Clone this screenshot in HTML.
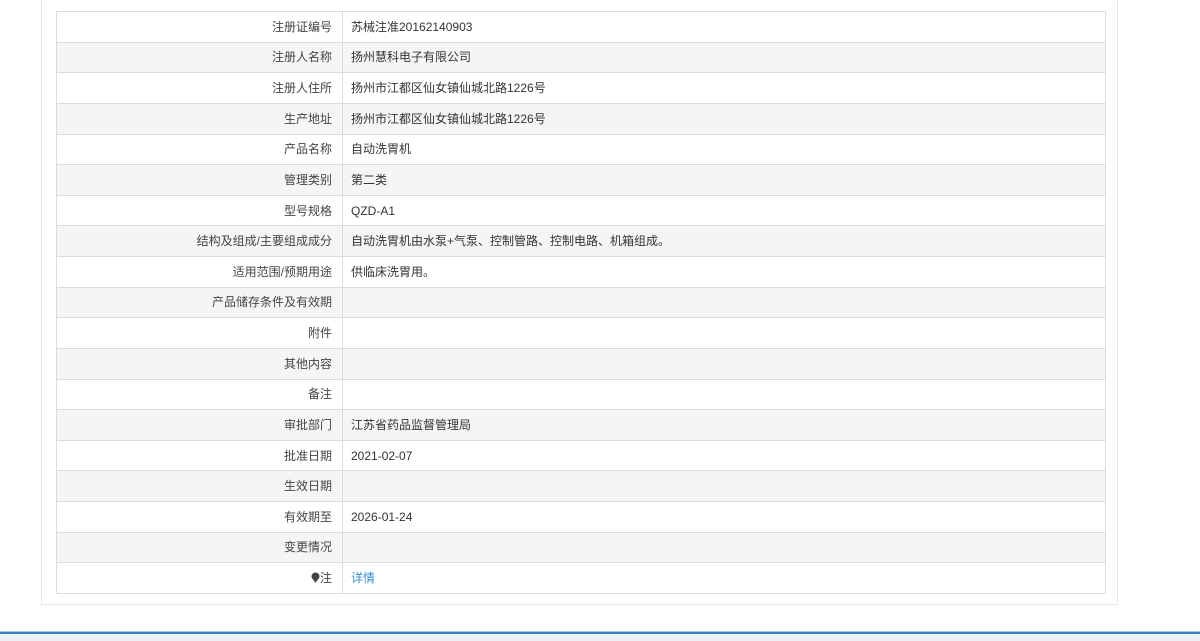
<!DOCTYPE html>
<html><head><meta charset="utf-8">
<style>
html,body{margin:0;padding:0;background:#fff;width:1200px;height:641px;overflow:hidden;}
body{font-family:"Liberation Sans","Noto Sans CJK SC",sans-serif;font-size:12px;color:#333;position:relative;}
.panel{position:absolute;left:41px;top:-2px;width:1077px;height:607px;border:1px solid #e8e8e8;box-sizing:border-box;}
table{position:absolute;left:56px;top:11px;width:1050px;border-collapse:collapse;}
td{height:29.63px;border:1px solid #dcdcdc;padding:0;line-height:28px;}
td.l{width:275px;text-align:right;padding-right:10px;color:#444;}
td.r{padding-left:8px;color:#333;}
tr:nth-child(even) td{background:#f5f5f5;}
a{color:#3a8fd6;text-decoration:none;}
.foot{position:absolute;left:0;top:632px;width:1200px;height:9px;background:#eef1f4;border-top:2px solid #3b7fb8;box-sizing:border-box;}
.foot:before{content:"";position:absolute;left:0;top:-3px;width:100%;height:1px;background:#a9cbe6;}
</style></head><body>
<div class="panel"></div>
<table>
<tr><td class="l">注册证编号</td><td class="r">苏械注准20162140903</td></tr>
<tr><td class="l">注册人名称</td><td class="r">扬州慧科电子有限公司</td></tr>
<tr><td class="l">注册人住所</td><td class="r">扬州市江都区仙女镇仙城北路1226号</td></tr>
<tr><td class="l">生产地址</td><td class="r">扬州市江都区仙女镇仙城北路1226号</td></tr>
<tr><td class="l">产品名称</td><td class="r">自动洗胃机</td></tr>
<tr><td class="l">管理类别</td><td class="r">第二类</td></tr>
<tr><td class="l">型号规格</td><td class="r">QZD-A1</td></tr>
<tr><td class="l">结构及组成/主要组成成分</td><td class="r">自动洗胃机由水泵+气泵、控制管路、控制电路、机箱组成。</td></tr>
<tr><td class="l">适用范围/预期用途</td><td class="r">供临床洗胃用。</td></tr>
<tr><td class="l">产品储存条件及有效期</td><td class="r"></td></tr>
<tr><td class="l">附件</td><td class="r"></td></tr>
<tr><td class="l">其他内容</td><td class="r"></td></tr>
<tr><td class="l">备注</td><td class="r"></td></tr>
<tr><td class="l">审批部门</td><td class="r">江苏省药品监督管理局</td></tr>
<tr><td class="l">批准日期</td><td class="r">2021-02-07</td></tr>
<tr><td class="l">生效日期</td><td class="r"></td></tr>
<tr><td class="l">有效期至</td><td class="r">2026-01-24</td></tr>
<tr><td class="l">变更情况</td><td class="r"></td></tr>
<tr><td class="l"><svg width="9" height="11" viewBox="0 0 9 11" style="vertical-align:-1px"><path d="M4.5 0.5A4 4 0 0 1 8.5 4.5C8.5 6.5 6 8 5 10.5H4C3 8 0.5 6.5 0.5 4.5A4 4 0 0 1 4.5 0.5Z" fill="#444"/></svg>注</td><td class="r"><a>详情</a></td></tr>
</table>
<div class="foot"></div>
</body></html>
